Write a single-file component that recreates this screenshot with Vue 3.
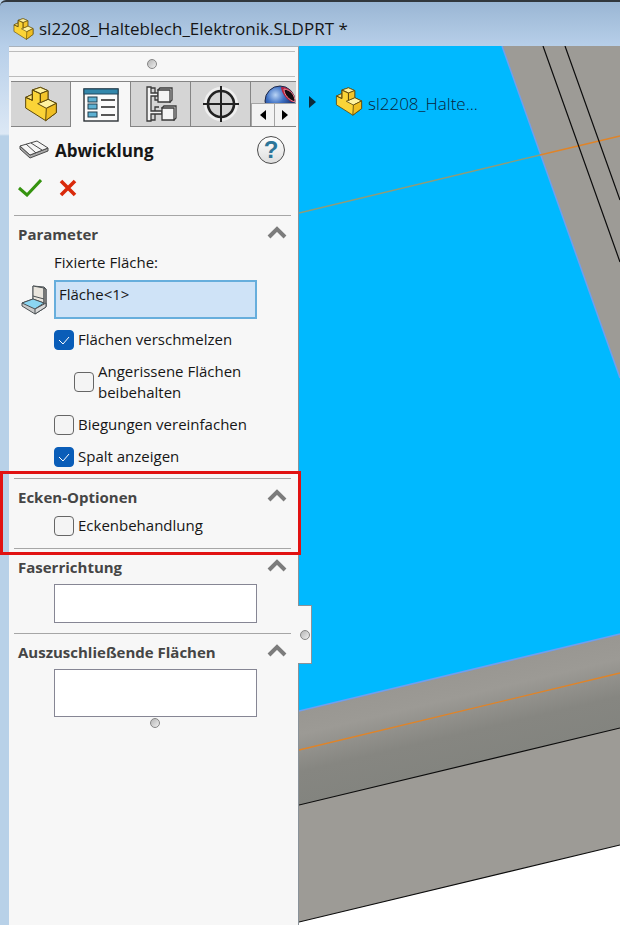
<template>
  <div class="window">
    <svg class="sprite" aria-hidden="true">
      <symbol id="part" viewBox="0 0 96 106">
        <g stroke="#5c480c" stroke-width="3" stroke-linejoin="round">
          <path fill="#fbd437" d="M2 33 22 24V11L46 3 69 13V39L94 51V79L62 103 2 65Z" />
          <path fill="#fff3a0" d="M22 11 46 3 69 13 46 22Z" />
          <path fill="#fff3a0" d="M38 52 69 39 94 51 64 66Z" />
          <path fill="#fbe37a" d="M2 33 22 24V42Z" />
          <path fill="#f3c42a" d="M46 22 69 13V39L46 49Z" />
          <path fill="#f0be22" d="M64 66 94 51V79L62 103Z" />
          <path fill="none" d="M2 33 22 42V11L46 22V49" />
        </g>
      </symbol>
    </svg>

    <header class="titlebar">
      <svg class="title-icon"><use href="#part" /></svg>
      <span>sl2208_Halteblech_Elektronik.SLDPRT *</span>
    </header>

    <main class="workspace">
      <aside class="panel">
        <div class="grip"><span class="dot"></span></div>

        <nav class="tabs">
          <button class="tab" type="button" aria-label="FeatureManager">
            <svg width="32" height="36"><use href="#part" /></svg>
          </button>
          <button class="tab active" type="button" aria-label="PropertyManager">
            <svg width="36" height="34" viewBox="0 0 36 34">
              <rect x="1" y="1" width="34" height="32" fill="#fbfbfb" stroke="#2b3136" stroke-width="1.4" />
              <rect x="1" y="1" width="34" height="5" fill="#3287ab" stroke="#20475c" />
              <g fill="#5db1d3" stroke="#1f3d4c">
                <rect x="5" y="9" width="9" height="5" />
                <rect x="5" y="16" width="9" height="5" />
                <rect x="5" y="24" width="9" height="5" />
              </g>
              <path d="M18 12h14M18 19h14M18 27h14" stroke="#222" stroke-width="1.6" />
            </svg>
          </button>
          <button class="tab" type="button" aria-label="ConfigurationManager">
            <svg width="32" height="38" viewBox="0 0 32 38" fill="#f4f4f4" stroke="#3a3a3a" stroke-width="1.3">
              <path d="M2 2h4v6h7v3H6v15h11v3H6v7H2z" />
              <path d="M6 3h4v5M6 35h4v-6M10 11v4h4M10 26v-4h4" fill="none" />
              <path d="m13 5 2-2h12v12l-2 2z" />
              <path d="M13 5h12v12H13z" />
              <path d="m17 23 2-2h12v12l-2 2z" />
              <path d="M17 23h12v12H17z" />
            </svg>
          </button>
          <button class="tab" type="button" aria-label="DimXpertManager">
            <svg width="38" height="38" viewBox="0 0 38 38" fill="none" stroke="#222">
              <circle cx="19" cy="19" r="15" stroke="#efefef" stroke-width="4" />
              <circle cx="19" cy="19" r="13" stroke-width="2.6" />
              <path d="M19 1v36M1 19h36" stroke-width="2" />
            </svg>
          </button>
          <div class="tab tab-more">
            <svg class="ball" width="32" height="32" viewBox="0 0 32 32">
              <defs>
                <radialGradient id="ballShade" cx="0.35" cy="0.3" r="0.6">
                  <stop offset="0" stop-color="#b9d4f5" />
                  <stop offset="0.5" stop-color="#3d70c4" />
                  <stop offset="1" stop-color="#1c3474" />
                </radialGradient>
              </defs>
              <circle cx="16" cy="16" r="15" fill="url(#ballShade)" stroke="#1d2645" />
              <path d="M17 2C26 2 31 9 31 17L28 17C22 14 18 9 17 2Z" fill="#b81f3b" />
              <path d="M20 4C27 5 31 10 31 17C25 15 20 10 20 4Z" fill="#160b10" stroke="#ef8796" />
            </svg>
            <div class="scrollers">
              <button type="button" aria-label="Zurück">
                <svg width="6" height="10"><path d="M6 0v10L0 5z" /></svg>
              </button>
              <button type="button" aria-label="Weiter">
                <svg width="6" height="10"><path d="M0 0v10l6-5z" /></svg>
              </button>
            </div>
          </div>
        </nav>

        <div class="heading">
          <svg width="30" height="20" viewBox="0 0 30 20" stroke="#4a4a4a" stroke-linejoin="round">
            <path d="M1 6v3l10 9 18-7V8L11 15z" fill="#a9a9a9" />
            <path d="M1 6 18 1l11 7-18 7z" fill="#f6f6f6" />
            <path d="m7 4 10 9M12 3l11 7" />
          </svg>
          <h1>Abwicklung</h1>
          <button class="help" type="button" aria-label="Hilfe">?</button>
        </div>

        <div class="actions">
          <button type="button" aria-label="OK">
            <svg width="24" height="18" viewBox="0 0 24 18">
              <path d="m1 9 8 7L23 1" fill="none" stroke="#35930f" stroke-width="3" />
            </svg>
          </button>
          <button type="button" aria-label="Abbrechen">
            <svg width="18" height="18" viewBox="0 0 18 18">
              <path d="m2 2 14 14M16 2 2 16" stroke="#d92a0b" stroke-width="3.6" />
            </svg>
          </button>
        </div>

        <section
          v-for="section in sections"
          :key="section.title"
          class="section"
          :class="{ marked: section.marked }"
        >
          <div class="section-header">
            <h2>{{ section.title }}</h2>
            <button type="button" :aria-label="section.title + ' einklappen'" @click="section.open = !section.open">
              <svg width="20" height="13" viewBox="0 0 20 13" :class="{ flipped: !section.open }">
                <path d="m2 11 8-8 8 8" fill="none" stroke="#7c7c7c" stroke-width="4" />
              </svg>
            </button>
          </div>

          <template v-if="section.open">
            <div v-if="section.field" class="field">
              <label v-if="section.field.label" :for="section.field.id">{{ section.field.label }}</label>
              <div class="field-row">
                <svg v-if="section.field.label" width="28" height="30" viewBox="0 0 28 30" stroke="#4b5154" stroke-linejoin="round">
                  <path d="M2 18v3l13 8 11-7V4L24 2 13 1v13z" fill="#c9c9c9" />
                  <path d="M13 1 24 3v15l-11-4z" fill="#e9e5dd" />
                  <path d="m24 3 2 1v17l-2 1z" fill="#a5a09a" />
                  <path d="m2 18 11-4 11 4-9 6z" fill="#8bd6f2" />
                  <path d="m15 24 11-6v4l-11 7z" fill="#d9d9d9" />
                  <path d="m13 11 11 3" />
                </svg>
                <textarea
                  :id="section.field.id"
                  v-model="section.field.value"
                  :class="{ selected: section.field.label, tall: section.field.tall }"
                  :aria-label="section.title"
                  spellcheck="false"
                ></textarea>
              </div>
            </div>
            <div v-if="section.options" class="options">
              <label v-for="option in section.options" :key="option.label" :class="{ nested: option.nested }">
                <input v-model="option.checked" type="checkbox" />
                <span>{{ option.label }}</span>
              </label>
            </div>
          </template>
        </section>

        <div class="bottom-grip"><span class="dot"></span></div>
      </aside>

      <div class="viewport">
        <svg class="model" viewBox="0 0 321 879" preserveAspectRatio="xMinYMin slice">
          <defs>
            <linearGradient id="bend" gradientUnits="userSpaceOnUse" x1="0" y1="665" x2="21" y2="754">
              <stop offset="0" stop-color="#999792" />
              <stop offset="0.25" stop-color="#9c9a95" />
              <stop offset="0.65" stop-color="#868681" />
              <stop offset="1" stop-color="#83847f" />
            </linearGradient>
          </defs>
          <path d="M0 0H321V879H0Z" fill="#9d9b96" />
          <path d="M0 665 321 588V682L0 759Z" fill="url(#bend)" />
          <path d="M0 876 321 799V879H0Z" fill="#fff" />
          <path d="M0 0H203L321 332V588L0 665Z" fill="#00b9ff" />
          <path d="M203 0 321 332M321 588 0 665" fill="none" stroke="#6f9ff0" stroke-width="1.5" />
          <path d="M0 167 241 109" stroke="#8f9c78" stroke-width="1.3" />
          <path d="M241 109 321 90M0 704 321 627" stroke="#e08428" stroke-width="1.3" />
          <path d="M244 0 321 216M266 0 321 154M0 759 321 682M0 876 321 799" stroke="#0c0c0c" stroke-width="1.2" />
        </svg>
        <div class="tree">
          <svg width="7" height="12"><path d="M0 0v12l7-6z" fill="#0d2c3c" /></svg>
          <svg class="tree-icon"><use href="#part" /></svg>
          <span>sl2208_Halte...</span>
        </div>
        <div class="handle"><span class="dot"></span></div>
      </div>
    </main>
  </div>
</template>

<script setup>
import { ref } from 'vue'

const sections = ref([
  {
    title: 'Parameter',
    open: true,
    field: { id: 'fixed-face', label: 'Fixierte Fläche:', value: 'Fläche<1>' },
    options: [
      { label: 'Flächen verschmelzen', checked: true },
      { label: 'Angerissene Flächen beibehalten', checked: false, nested: true },
      { label: 'Biegungen vereinfachen', checked: false },
      { label: 'Spalt anzeigen', checked: true },
    ],
  },
  {
    title: 'Ecken-Optionen',
    open: true,
    marked: true,
    options: [{ label: 'Eckenbehandlung', checked: false }],
  },
  { title: 'Faserrichtung', open: true, field: { id: 'grain', value: '' } },
  { title: 'Auszuschließende Flächen', open: true, field: { id: 'exclude', value: '', tall: true } },
])
</script>

<style>
body { margin: 0; }
</style>

<style scoped>
* { box-sizing: border-box; }
button { padding: 0; border: 0; background: none; cursor: pointer; }
svg { display: block; flex: none; }

.window {
  display: flex;
  flex-direction: column;
  min-height: 100vh;
  font-family: "Open Sans", "Noto Sans", sans-serif;
  font-size: 15px;
  color: #161616;
  background: #b8d1e8;
}
.sprite { position: absolute; width: 0; height: 0; }

.titlebar {
  display: flex;
  align-items: center;
  gap: 5px;
  height: 46px;
  padding: 9px 13px 0;
  border-top: 2px solid #31373d;
  border-top-left-radius: 6px;
  background: linear-gradient(#9ab6d4, #b7cfe9);
  font-size: 17px;
  white-space: nowrap;
}
.title-icon { width: 21px; height: 22px; }

.workspace {
  display: flex;
  flex: 1;
  background: linear-gradient(#b7cfe9, #dce8f5 88px, #b8d1e8 90px);
}
.panel {
  position: relative;
  z-index: 1;
  flex: none;
  width: 290px;
  margin-left: 9px;
  border-top: 1px solid #a9b2bb;
  border-right: 1px solid #8a9299;
  background: #f7f7f7;
}
.dot {
  display: block;
  width: 10px;
  height: 10px;
  border: 1px solid #858585;
  border-radius: 50%;
  background: linear-gradient(135deg, #b5b5b5, #efefef);
}
.grip {
  display: flex;
  align-items: center;
  justify-content: center;
  height: 26px;
  margin: 4px 3px 4px 0;
  border-top: 1px solid #bcbcbc;
  border-bottom: 1px solid #bcbcbc;
}

.tabs { display: flex; height: 46px; padding: 0 2px; }
.tab {
  display: flex;
  align-items: center;
  justify-content: center;
  width: 60px;
  border: 1px solid #858585;
  border-left: 0;
  background: #d5d5d5;
}
.tab.active { border-bottom: 0; background: #f7f7f7; }
.tab-more {
  flex-direction: column;
  justify-content: flex-end;
  align-items: stretch;
  width: 45px;
  border-right: 0;
  overflow: hidden;
}
.ball { align-self: flex-end; margin-bottom: -14px; }
.scrollers { position: relative; display: flex; flex: none; height: 23px; }
.scrollers button {
  display: flex;
  flex: 1;
  align-items: center;
  justify-content: center;
  border: 1px solid #a5a5a5;
  border-width: 1px 0 0 1px;
  background: #f3f3f3;
}

.heading { display: flex; align-items: center; gap: 6px; height: 46px; padding: 0 13px 0 10px; }
.heading h1 { flex: 1; margin: 0; font-size: 17px; }
.help {
  width: 28px;
  height: 28px;
  border: 1px solid #4b4b4b;
  border-radius: 50%;
  background: linear-gradient(#fff, #dedede);
  color: #2d7599;
  font: bold 24px/24px "Liberation Sans", sans-serif;
}
.actions { display: flex; align-items: center; gap: 17px; height: 30px; margin-bottom: 12px; padding-left: 9px; }

.section { position: relative; margin: 0 7px 0 5px; border-top: 1px solid #a6a6a6; }
.section-header {
  display: flex;
  align-items: center;
  justify-content: space-between;
  height: 35px;
  padding: 0 4px;
}
.section-header h2 { margin: 0; font-size: 15px; line-height: 20px; color: #454545; }
.section-header button { padding-bottom: 2px; }
.flipped { transform: rotate(180deg); }
/* callout frame around the whole section, past the panel edges */
.marked::after {
  content: '';
  position: absolute;
  inset: -8px -10px -7px -14px;
  border: 3px solid #e11212;
  pointer-events: none;
}

.field { padding: 0 34px 10px 5px; }
.field label { display: block; height: 29px; padding-left: 35px; line-height: 22px; }
.field-row { display: flex; align-items: center; justify-content: flex-end; gap: 6px; }
textarea {
  display: block;
  width: 203px;
  height: 39px;
  padding: 4px;
  border: 1px solid #868694;
  background: #fff;
  color: #161616;
  font: inherit;
  line-height: 20px;
  resize: none;
  outline: none;
}
textarea.tall { height: 48px; }
textarea.selected { padding: 2px 3px; border: 2px solid #67aedc; background: #cfe3f7; }

.options { display: flex; flex-direction: column; gap: 11px; padding: 1px 20px 12px 40px; }
.field + .options { padding: 0 20px 11px 40px; }
.options label { display: flex; align-items: center; gap: 4px; line-height: 21px; }
.options .nested { padding-left: 20px; }
.options input {
  flex: none;
  appearance: none;
  width: 20px;
  height: 20px;
  margin: 0;
  border: 1px solid #666;
  border-radius: 4px;
  background: #f4f4f4;
}
.options input:checked {
  border-color: #0a5db8;
  background: #0a5db8 url("data:image/svg+xml,%3Csvg xmlns='http://www.w3.org/2000/svg' viewBox='0 0 18 18'%3E%3Cpath d='m4 9 4 4 6-7' fill='none' stroke='white'/%3E%3C/svg%3E") center no-repeat;
}
.bottom-grip { display: flex; justify-content: center; margin-top: -9px; padding-left: 3px; }

.viewport { position: relative; flex: 1; min-width: 0; }
.model { position: absolute; inset: 0; width: 100%; height: 100%; }
.tree {
  position: relative;
  display: flex;
  align-items: center;
  padding: 39px 0 0 10px;
  color: #0a1f38;
  font-size: 17px;
  font-weight: 300;
  line-height: 29px;
  white-space: nowrap;
}
.tree-icon { width: 28px; height: 29px; margin: 0 5px 0 19px; }
.tree span { padding-top: 4px; }
.handle {
  position: absolute;
  top: 559px;
  left: -1px;
  z-index: 2;
  display: flex;
  align-items: center;
  justify-content: center;
  width: 14px;
  height: 59px;
  border: 1px solid #8a9299;
  border-left: 0;
  background: #f7f7f7;
}
</style>
